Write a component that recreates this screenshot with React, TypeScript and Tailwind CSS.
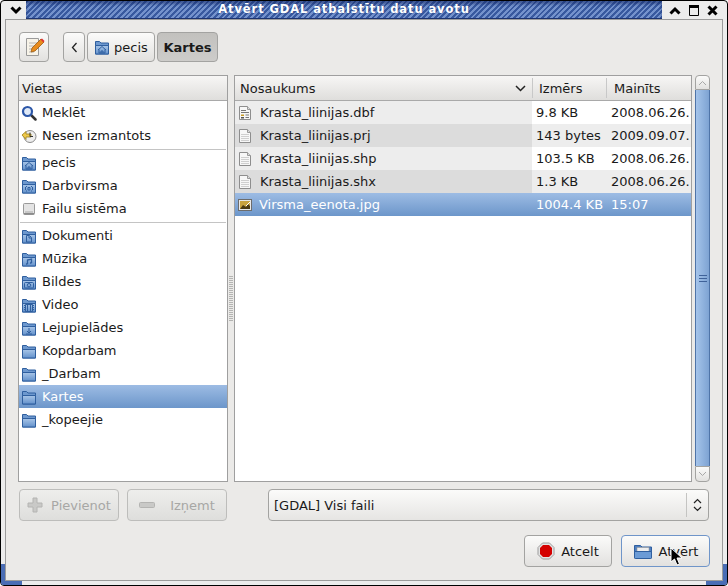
import React from "react";

type Emblem = "home" | "desk" | "doc" | "music" | "cam" | "video" | "down" | "none";

function Folder({ emblem = "none" }: { emblem?: Emblem }) {
  const c = "#2f5f9f";
  return (
    <svg width="16" height="16" viewBox="0 0 16 16" className="shrink-0">
      <defs>
        <linearGradient id="fg" x1="0" y1="0" x2="0" y2="1">
          <stop offset="0" stopColor="#a9c6e8" />
          <stop offset="1" stopColor="#6391cb" />
        </linearGradient>
      </defs>
      <path d="M1.5 2.5h4l1.5 1.5h7.5v11h-13z" fill="#6d98ce" stroke="#2f5f9f" />
      <path d="M1.5 6.5h13v8.5h-13z" fill="url(#fg)" stroke="#2f5f9f" />
      {emblem === "home" && <path d="M4 11l4-3.5 4 3.5M5 10.5V14h6v-3.5M7 14v-2h2v2" fill="none" stroke={c} />}
      {emblem === "desk" && <path d="M5 8.5h1M10 8.5h1M5 13h1M10 13h1M4.5 9v3M11.5 9v3M7 9.5h2v2.5H7z" fill="none" stroke={c} />}
      {emblem === "doc" && <path d="M5.5 7.5h3l2 2v4.500h-5zM8 8v2h2" fill="none" stroke={c} />}
      {emblem === "music" && <path d="M6.500 13V9l4-1v4M5 13h1.500M9 12h1.500" fill="none" stroke={c} strokeWidth="1.300" />}
      {emblem === "cam" && (
        <g fill="none" stroke={c}>
          <rect x="3.500" y="8.500" width="9" height="5.500" rx="1" />
          <circle cx="8" cy="11.200" r="1.700" />
        </g>
      )}
      {emblem === "video" && <path d="M4.500 7.500h7v7h-7zM6.500 7.500v7M9.500 7.500v7M3 8.500h1M3 10.500h1M3 12.500h1M12 8.500h1M12 10.500h1M12 12.500h1" fill="none" stroke={c} />}
      {emblem === "down" && <path d="M8 8v5M6 11l2 2 2-2M5 14h6" fill="none" stroke={c} />}
    </svg>
  );
}

function Search() {
  return (
    <svg width="16" height="16" viewBox="0 0 16 16" className="shrink-0">
      <path d="M10 10l4.500 4.500" stroke="#333" strokeWidth="2.500" strokeLinecap="round" />
      <circle cx="6.500" cy="6.500" r="4.500" fill="#dfe9f7" stroke="#2c57a8" strokeWidth="2.200" />
    </svg>
  );
}

function Clock() {
  return (
    <svg width="16" height="16" viewBox="0 0 16 16" className="shrink-0">
      <circle cx="9" cy="8.500" r="6" fill="#eee" stroke="#8b8b8b" />
      <path d="M1 7l4-3.500V6h5v3H5v2.500z" fill="#eec94a" stroke="#9b7d1a" strokeWidth=".8" />
      <path d="M9 4.500v4h3" fill="none" stroke="#333" />
    </svg>
  );
}

function Disk() {
  return (
    <svg width="16" height="16" viewBox="0 0 16 16" className="shrink-0">
      <rect x="2.500" y="2.500" width="11" height="11" rx="1" fill="#e4e4e4" stroke="#9a9a9a" />
      <path d="M4 11h8" stroke="#aaa" />
      <rect x="3" y="12" width="10" height="1.500" fill="#8c8c8c" />
    </svg>
  );
}

function Doc({ kind = "txt" }: { kind?: "txt" | "db" }) {
  return (
    <svg width="14" height="16" viewBox="0 0 14 16" className="shrink-0">
      <path d="M1.500 1.500h8l3 3v10h-11z" fill="#f7f7f7" stroke="#8e8e8e" />
      <path d="M9.500 1.500v3h3" fill="#ddd" stroke="#9a9a9a" />
      {kind === "txt" ? (
        <path d="M3 6.500h8M3 8.500h8M3 10.500h8M3 12.500h8" stroke="#cfcfcf" />
      ) : (
        <g>
          <path d="M3 5.500h5M3 7.500h8" stroke="#777" />
          <rect x="3" y="9.500" width="3" height="1.500" fill="#c69a26" />
          <rect x="3" y="12" width="3" height="1.500" fill="#555" />
          <path d="M7.500 10h3.500M7.500 12.500h3.500" stroke="#777" />
        </g>
      )}
    </svg>
  );
}

function Pic() {
  return (
    <svg width="16" height="16" viewBox="0 0 16 16" className="shrink-0">
      <rect x="1.500" y="2.500" width="13" height="11" fill="#e9e9e9" stroke="#6c6c6c" />
      <rect x="3" y="4" width="10" height="8" fill="#c9a33e" />
      <path d="M3 12l3-4 3 2 2-3 2 2v3z" fill="#4b3a12" />
      <path d="M9 9l4-4" stroke="#fff" />
    </svg>
  );
}

function Btn({ className = "", children }: { className?: string; children: React.ReactNode }) {
  return (
    <div className={`flex items-center justify-center rounded-[4px] border border-[#a3a3a1] bg-gradient-to-b from-[#fbfbfa] to-[#e2e1df] ${className}`}>
      {children}
    </div>
  );
}

const places: ({ n: string; i: React.ReactNode; sel?: boolean } | null)[] = [
  { n: "Meklēt", i: <Search /> },
  { n: "Nesen izmantots", i: <Clock /> },
  null,
  { n: "pecis", i: <Folder emblem="home" /> },
  { n: "Darbvirsma", i: <Folder emblem="desk" /> },
  { n: "Failu sistēma", i: <Disk /> },
  null,
  { n: "Dokumenti", i: <Folder emblem="doc" /> },
  { n: "Mūzika", i: <Folder emblem="music" /> },
  { n: "Bildes", i: <Folder emblem="cam" /> },
  { n: "Video", i: <Folder emblem="video" /> },
  { n: "Lejupielādes", i: <Folder emblem="down" /> },
  { n: "Kopdarbam", i: <Folder /> },
  { n: "_Darbam", i: <Folder /> },
  { n: "Kartes", i: <Folder />, sel: true },
  { n: "_kopeejie", i: <Folder /> },
];

const files = [
  { n: "Krasta_liinijas.dbf", s: "9.8 KB", d: "2008.06.26.", i: <Doc kind="db" /> },
  { n: "Krasta_liinijas.prj", s: "143 bytes", d: "2009.09.07.", i: <Doc /> },
  { n: "Krasta_liinijas.shp", s: "103.5 KB", d: "2008.06.26.", i: <Doc /> },
  { n: "Krasta_liinijas.shx", s: "1.3 KB", d: "2008.06.26.", i: <Doc /> },
];

const hdr = "bg-gradient-to-b from-[#f7f6f5] to-[#dfdedc]";
const sel = "bg-gradient-to-b from-[#9dbce4] to-[#6c96ca] text-white";

export default function App() {
  return (
    <div className="relative w-[728px] h-[586px] bg-white overflow-hidden text-[13px] leading-none text-[#1a1a1a] font-['DejaVu_Sans',sans-serif]">
      <div className="flex flex-col h-full border border-black rounded-[4px] bg-[#ececec]">
        {/* title bar */}
        <div className="flex h-[18px] shrink-0">
          <div className="w-[25px] flex items-center justify-center pl-[5px]">
            <svg width="12" height="9" viewBox="0 0 12 9"><path d="M1.500 1.500L6 6l4.500-4.500" fill="none" stroke="#000" strokeWidth="3" /></svg>
          </div>
          <div className="flex-1 flex items-center justify-center border-b border-[#1c3370] text-white font-bold text-[11.5px] tracking-[0.9px] bg-[repeating-linear-gradient(135deg,#38599f_0_2px,#7492cc_2px_4px)] shadow-[inset_0_3px_3px_rgba(20,40,100,0.55)] [text-shadow:0_0_2px_#2a4588]">
            Atvērt GDAL atbalstītu datu avotu
          </div>
          <div className="w-[65px] flex items-center pl-[3px] pr-[5px]">
            <div className="w-[20px] flex justify-center">
              <svg width="12" height="9" viewBox="0 0 12 9"><path d="M1.500 7.500L6 3l4.500 4.500" fill="none" stroke="#000" strokeWidth="3" /></svg>
            </div>
            <div className="w-[20px] flex justify-center">
              <svg width="10" height="11" viewBox="0 0 10 11"><path d="M.500.500h9v10h-9z" fill="none" stroke="#000" /><path d="M0 0h10v3H0z" fill="#000" /></svg>
            </div>
            <div className="w-[20px] flex justify-center">
              <svg width="11" height="11" viewBox="0 0 11 11"><path d="M1.500 1.500l8 8M9.500 1.500l-8 8" stroke="#000" strokeWidth="3" /></svg>
            </div>
          </div>
        </div>

        {/* dialog */}
        <div className="flex-1 min-h-0 mx-[4px] mb-[4px] border border-[#9b9b9b] bg-[#ebeae8] pt-[12px] pl-[12px] pr-[12px] flex flex-col">
          {/* path bar */}
          <div className="flex h-[30px] ml-px shrink-0">
            <Btn className="w-[30px] mr-[14px]">
              <svg width="24" height="24" viewBox="0 0 24 24">
                <path d="M4.500 3.500h12v17h-12z" fill="#f7f3e8" stroke="#9a9a9a" />
                <path d="M7 8h8M7 11h8M7 14h5M7 17h5" stroke="#b5b5b5" />
                <path d="M9 17l1-4 9-9 3 3-9 9z" fill="#e88c1e" stroke="#9c5a10" strokeWidth=".8" />
                <path d="M18.500 4.500l3 3 1-1.500-2.500-2.500z" fill="#d33" />
              </svg>
            </Btn>
            <Btn className="w-[22px] mr-[2px]">
              <svg width="7" height="11" viewBox="0 0 7 11"><path d="M5.500 1L1.500 5.500l4 4.500" fill="none" stroke="#222" strokeWidth="1.300" /></svg>
            </Btn>
            <Btn className="w-[68px] mr-[2px] gap-[4px]">
              <Folder emblem="home" />
              <span>pecis</span>
            </Btn>
            <div className="w-[61px] flex items-center justify-center rounded-[4px] border border-[#a3a3a1] bg-gradient-to-b from-[#c2c1be] to-[#cdccca] font-bold">
              Kartes
            </div>
          </div>

          {/* panes */}
          <div className="flex h-[407px] mt-[13px] shrink-0">
            <div className="w-[210px] shrink-0 border border-[#9f9f9f] bg-white flex flex-col">
              <div className={`h-[25px] shrink-0 border-b border-[#a9a9a9] flex items-center pl-[3px] ${hdr}`}>Vietas</div>
              {places.map((p, k) =>
                p === null ? (
                  <div key={k} className="h-[4px] flex items-center px-px shrink-0">
                    <div className="w-full h-px bg-[#c4c4c4]" />
                  </div>
                ) : (
                  <div key={k} className={`h-[23px] shrink-0 flex items-center pl-[2px] gap-[5px] ${p.sel ? sel : ""}`}>
                    {p.i}
                    <span>{p.n}</span>
                  </div>
                ),
              )}
            </div>

            <div className="w-[6px] shrink-0 flex justify-center pt-[200px]">
              <div className="w-[4px] h-[46px] bg-[repeating-linear-gradient(0deg,#b4b4b2_0_1px,transparent_1px_2px)]" />
            </div>

            <div className="w-[458px] shrink-0 border border-[#9f9f9f] bg-white flex flex-col">
              <div className={`h-[25px] shrink-0 border-b border-[#a9a9a9] flex ${hdr}`}>
                <div className="w-[297px] flex items-center pl-[5px] pr-[6px] justify-between">
                  <span>Nosaukums</span>
                  <svg width="11" height="7" viewBox="0 0 11 7"><path d="M1 1l4.500 4.500L10 1" fill="none" stroke="#222" strokeWidth="1.500" /></svg>
                </div>
                <div className="w-[74px] flex items-center pl-[6px] border-l border-[#c8c8c8] my-[2px]">Izmērs</div>
                <div className="flex-1 flex items-center pl-[7px] border-l border-[#c8c8c8] my-[2px]">Mainīts</div>
              </div>
              {files.map((f, k) => (
                <div key={f.n} className="h-[23px] shrink-0 flex">
                  <div className={`w-[297px] flex items-center gap-[8px] pl-[3px] ${k % 2 ? "bg-[#dcdcdc]" : "bg-[#ededed]"}`}>
                    {f.i}
                    <span>{f.n}</span>
                  </div>
                  <div className={`flex-1 flex items-center ${k % 2 ? "bg-[#ededed]" : "bg-white"}`}>
                    <div className="w-[74px] pl-[4px] whitespace-nowrap">{f.s}</div>
                    <div className="pl-[5px] whitespace-nowrap">{f.d}</div>
                  </div>
                </div>
              ))}
              <div className={`h-[23px] shrink-0 flex items-center ${sel}`}>
                <div className="w-[297px] flex items-center gap-[6px] pl-[2px]">
                  <Pic />
                  <span>Virsma_eenota.jpg</span>
                </div>
                <div className="w-[74px] pl-[4px] whitespace-nowrap">1004.4 KB</div>
                <div className="pl-[5px]">15:07</div>
              </div>
            </div>

            {/* scrollbar */}
            <div className="w-[15px] ml-[3px] shrink-0 flex flex-col">
              <div className="h-[15px] shrink-0 flex items-center justify-center rounded-t-[4px] border border-[#a3a3a1] bg-gradient-to-b from-[#fbfbfa] to-[#e2e1df]">
                <svg width="9" height="6" viewBox="0 0 9 6"><path d="M1 5l3.500-3.500L8 5" fill="none" stroke="#a8a8a8" /></svg>
              </div>
              <div className="flex-1 flex flex-col items-center justify-center gap-[2px] border-x border-[#4f74a8] bg-gradient-to-r from-[#a5c4ea] to-[#7ea3d3]">
                <div className="w-[8px] h-px bg-[#3f6299]" />
                <div className="w-[8px] h-px bg-[#3f6299]" />
                <div className="w-[8px] h-px bg-[#3f6299]" />
              </div>
              <div className="h-[16px] shrink-0 flex items-center justify-center rounded-b-[4px] border border-[#a3a3a1] bg-gradient-to-b from-[#fbfbfa] to-[#e2e1df]">
                <svg width="9" height="6" viewBox="0 0 9 6"><path d="M1 1l3.500 3.500L8 1" fill="none" stroke="#a8a8a8" /></svg>
              </div>
            </div>
          </div>

          {/* add / remove + filter */}
          <div className="flex h-[32px] mt-[7px] ml-px shrink-0 text-[#a7a7a5]">
            <div className="w-[100px] mr-[8px] flex items-center justify-center gap-[8px] rounded-[4px] border border-[#bdbdbb] bg-gradient-to-b from-[#eeeeec] to-[#dededc]">
              <svg width="16" height="16" viewBox="0 0 16 16"><path d="M6 1h4v5h5v4h-5v5H6v-5H1V6h5z" fill="#c9c9c7" stroke="#b4b4b2" /></svg>
              <span>Pievienot</span>
            </div>
            <div className="w-[100px] flex items-center justify-center gap-[15px] rounded-[4px] border border-[#bdbdbb] bg-gradient-to-b from-[#eeeeec] to-[#dededc]">
              <svg width="16" height="6" viewBox="0 0 16 6"><rect x=".5" y=".5" width="15" height="5" rx="1" fill="#c9c9c7" stroke="#b4b4b2" /></svg>
              <span>Izņemt</span>
            </div>
            <div className="w-[441px] ml-[41px] flex items-center rounded-[4px] border border-[#a3a3a1] bg-gradient-to-b from-[#fbfbfa] to-[#e6e5e3] text-[#1a1a1a]">
              <span className="flex-1 pl-[5px]">[GDAL] Visi faili</span>
              <div className="w-[22px] h-[24px] border-l border-[#c4c4c2] flex items-center justify-center">
                <svg width="9" height="14" viewBox="0 0 9 14"><path d="M1 5l3.500-3.500L8 5M1 9l3.500 3.500L8 9" fill="none" stroke="#222" strokeWidth="1.200" /></svg>
              </div>
            </div>
          </div>

          {/* action buttons */}
          <div className="flex h-[32px] mt-[14px] justify-end gap-[9px] shrink-0">
            <Btn className="w-[88px] gap-[6px]">
              <svg width="18" height="18" viewBox="0 0 18 18">
                <path d="M5.500 1h7L17 5.500v7L12.500 17h-7L1 12.500v-7z" fill="#e3e3e3" stroke="#9c9c9c" />
                <path d="M6 3h6l3 3v6l-3 3H6l-3-3V6z" fill="#d40000" />
              </svg>
              <span>Atcelt</span>
            </Btn>
            <div className="w-[89px] flex items-center justify-center gap-[6px] rounded-[4px] border border-[#6f95c9] bg-gradient-to-b from-[#fbfbfa] to-[#e2e1df]">
              <svg width="20" height="18" viewBox="0 0 20 18">
                <path d="M1.500 3.500h6l1.500 1.500h9.500v11h-17z" fill="#4f7fc0" stroke="#2f5f9f" />
                <rect x="4" y="5.500" width="12" height="5" fill="#eee" stroke="#999" strokeWidth=".6" />
                <path d="M1.500 9.500h17v6a1 1 0 01-1 1h-15a1 1 0 01-1-1z" fill="#6b9bd6" stroke="#2f5f9f" />
              </svg>
              <span>Atvērt</span>
            </div>
          </div>
        </div>
      </div>

      {/* window-frame corner accents */}
      <div className="absolute left-px bottom-px w-[21px] h-[21px] border-l-4 border-b-4 border-[#4a6db5] rounded-bl-[3px]" />
      <div className="absolute right-px bottom-px w-[21px] h-[21px] border-r-4 border-b-4 border-[#4a6db5] rounded-br-[3px]" />

      {/* mouse cursor */}
      <svg className="absolute left-[670px] top-[547px]" width="14" height="20" viewBox="0 0 14 20">
        <path d="M1 1v14l3.500-3 2.500 6 2.500-1-2.500-6H12z" fill="#000" stroke="#fff" />
      </svg>
    </div>
  );
}
